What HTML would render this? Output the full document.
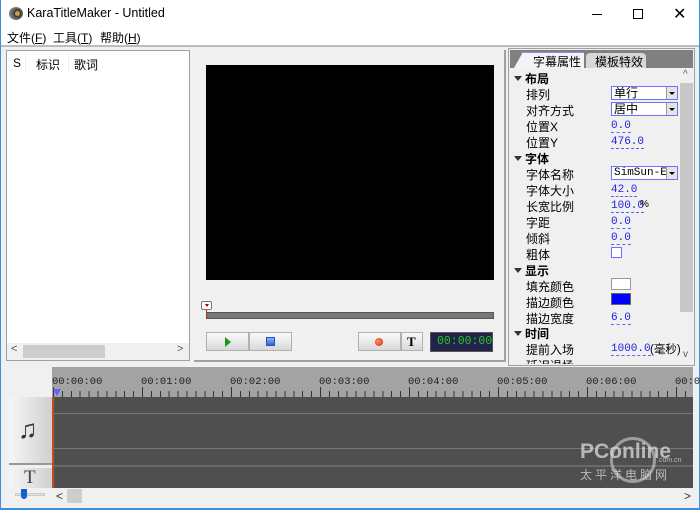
<!DOCTYPE html>
<html><head><meta charset="utf-8"><style>
*{margin:0;padding:0;box-sizing:border-box}
body{width:700px;height:510px;overflow:hidden;background:#f0f0f0;font-family:"Liberation Sans","Noto Sans CJK SC",sans-serif;font-size:12px;color:#000;position:relative}
.a{position:absolute}
.t{white-space:nowrap}
.lbl{position:absolute;left:526px;font-size:12px;white-space:nowrap}
.val{position:absolute;left:611px;font-family:"Liberation Mono","Noto Sans CJK SC",monospace;font-size:11px;color:#2020e0;border-bottom:1px dashed #6060ff;line-height:12px;white-space:nowrap}
.sec{position:absolute;left:514px;font-weight:bold;font-size:12px;white-space:nowrap}
.sec:before{content:"";display:inline-block;border-left:4px solid transparent;border-right:4px solid transparent;border-top:5px solid #333;margin-right:3px;vertical-align:2px}
.dd{position:absolute;left:611px;width:67px;height:14px;border:1px solid #7070ff;background:#fff;font-size:12px;line-height:12px;padding-left:2px;white-space:nowrap;overflow:hidden}
.dd b{position:absolute;right:0;top:0;width:11px;height:12px;background:#e4e4e4;border-left:1px solid #999}
.dd b:after{content:"";position:absolute;left:2px;top:5px;border-left:3px solid transparent;border-right:3px solid transparent;border-top:3px solid #000}
.btn{position:absolute;height:19px;background:linear-gradient(#fafafa,#d8d8d8);border:1px solid #b0b0b0}
.tick{position:absolute;font-family:"Liberation Mono",monospace;font-size:10.5px;color:#222}
</style></head><body>
<div class="a" style="left:0;top:0;width:1px;height:510px;background:#3c8fdc"></div>
<div class="a" style="left:699px;top:0;width:1px;height:510px;background:#3c8fdc"></div>
<div class="a" style="left:0;top:508px;width:700px;height:2px;background:#3c8fdc"></div>
<div class="a" style="left:1px;top:0;width:698px;height:28px;background:#fff"></div>
<div class="a" style="left:9px;top:7px;width:14px;height:13px;border-radius:50%;background:radial-gradient(circle at 60% 50%,#c8a040 0 2px,#333 3px,#777 6px)"></div>
<div class="a t" style="left:27px;top:6px;font-size:12.5px">KaraTitleMaker - Untitled</div>
<div class="a" style="left:592px;top:14px;width:10px;height:1px;background:#000"></div>
<div class="a" style="left:633px;top:9px;width:10px;height:10px;border:1px solid #000"></div>
<div class="a t" style="left:673px;top:4px;font-size:16px">✕</div>
<div class="a" style="left:1px;top:28px;width:698px;height:17px;background:#fff"></div>
<div class="a t" style="left:7px;top:29px">文件(<u>F</u>)</div>
<div class="a t" style="left:53px;top:29px">工具(<u>T</u>)</div>
<div class="a t" style="left:100px;top:29px">帮助(<u>H</u>)</div>
<div class="a" style="left:1px;top:45px;width:698px;height:2px;background:#bdbdbd"></div>
<div class="a" style="left:6px;top:50px;width:184px;height:311px;background:#fff;border:1px solid #a0a0a0"></div>
<div class="a t" style="left:13px;top:56px">S</div>
<div class="a" style="left:25px;top:53px;width:1px;height:20px;background:#eee"></div>
<div class="a t" style="left:36px;top:56px">标识</div>
<div class="a" style="left:68px;top:53px;width:1px;height:20px;background:#eee"></div>
<div class="a t" style="left:74px;top:56px">歌词</div>
<div class="a" style="left:7px;top:343px;width:182px;height:17px;background:#f0f0f0"></div>
<div class="a" style="left:23px;top:345px;width:82px;height:13px;background:#cdcdcd"></div>
<div class="a t" style="left:11px;top:343px;font-size:11px;color:#555">&lt;</div>
<div class="a t" style="left:177px;top:343px;font-size:11px;color:#555">&gt;</div>
<div class="a" style="left:194px;top:50px;width:312px;height:312px;border-right:2px solid #a0a0a0;border-bottom:2px solid #a0a0a0"></div>
<div class="a" style="left:206px;top:65px;width:288px;height:215px;background:#000"></div>
<div class="a" style="left:206px;top:312px;width:288px;height:7px;background:#777;border:1px solid #555"></div>
<div class="a" style="left:201px;top:301px;width:11px;height:9px;background:#fff;border:1px solid #777;border-radius:2px"></div>
<div class="a" style="left:205px;top:304px;border-left:2px solid transparent;border-right:2px solid transparent;border-top:3px solid #a00"></div>
<div class="a" style="left:206px;top:310px;width:1px;height:9px;background:#a33"></div>
<div class="btn" style="left:206px;top:332px;width:43px"></div>
<div class="btn" style="left:249px;top:332px;width:43px"></div>
<div class="a" style="left:225px;top:337px;border-top:5px solid transparent;border-bottom:5px solid transparent;border-left:6px solid #1a9a1a"></div>
<div class="a" style="left:266px;top:337px;width:9px;height:9px;background:linear-gradient(#8ab4ff,#2f66d8);border:1px solid #2950b0"></div>
<div class="btn" style="left:358px;top:332px;width:43px"></div>
<div class="btn" style="left:401px;top:332px;width:22px"></div>
<div class="a" style="left:375px;top:338px;width:8px;height:8px;border-radius:50%;background:radial-gradient(circle at 40% 40%,#ff9060,#d02000)"></div>
<div class="a t" style="left:407px;top:334px;font-family:'Liberation Serif',serif;font-weight:bold;font-size:13px">T</div>
<div class="a" style="left:430px;top:332px;width:63px;height:20px;background:#22224a;border:1px solid #555"></div>
<div class="a t" style="left:437px;top:335px;font-family:'Liberation Mono',monospace;font-size:11.5px;color:#20d020">00:00:00</div>
<div class="a" style="left:508px;top:48px;width:187px;height:318px;background:#f0f0f0;border:1px solid #a0a0a0"></div>
<div class="a" style="left:510px;top:50px;width:183px;height:18px;background:#808080"></div>
<div class="a" style="left:522px;top:52px;width:62px;height:16px;background:#f4f4f4;border-top:1px solid #88f"></div>
<div class="a" style="left:514px;top:52px;border-bottom:16px solid #f4f4f4;border-left:9px solid transparent"></div>
<div class="a t" style="left:533px;top:53px">字幕属性</div>
<div class="a" style="left:586px;top:53px;width:60px;height:15px;background:#d8d8d8;border-radius:4px 4px 0 0"></div>
<div class="a t" style="left:595px;top:53px">模板特效</div>
<div class="a" style="left:680px;top:68px;width:13px;height:296px;background:#f0f0f0"></div>
<div class="a" style="left:680px;top:83px;width:13px;height:229px;background:#c8c8c8"></div>
<div class="a t" style="left:683px;top:69px;font-size:10px;color:#555">^</div>
<div class="a t" style="left:683px;top:349px;font-size:10px;color:#555">v</div>

<div class="sec" style="top:70px">布局</div>
<div class="lbl" style="top:86px">排列</div><div class="dd" style="top:86px">单行<b></b></div>
<div class="lbl" style="top:102px">对齐方式</div><div class="dd" style="top:102px">居中<b></b></div>
<div class="lbl" style="top:118px">位置X</div><div class="val" style="top:120px">0.0</div>
<div class="lbl" style="top:134px">位置Y</div><div class="val" style="top:136px">476.0</div>
<div class="sec" style="top:150px">字体</div>
<div class="lbl" style="top:166px">字体名称</div><div class="dd" style="top:166px;font-family:'Liberation Mono',monospace;font-size:11px">SimSun-Ext<b></b></div>
<div class="lbl" style="top:182px">字体大小</div><div class="val" style="top:184px">42.0</div>
<div class="lbl" style="top:198px">长宽比例</div><div class="val" style="top:200px">100.0</div><div class="a t" style="left:640px;top:199px;font-size:10px">%</div>
<div class="lbl" style="top:214px">字距</div><div class="val" style="top:216px">0.0</div>
<div class="lbl" style="top:230px">倾斜</div><div class="val" style="top:232px">0.0</div>
<div class="lbl" style="top:246px">粗体</div><div class="a" style="left:611px;top:247px;width:11px;height:11px;border:1px solid #7070ff;background:#fff"></div>
<div class="sec" style="top:262px">显示</div>
<div class="lbl" style="top:278px">填充颜色</div><div class="a" style="left:611px;top:278px;width:20px;height:12px;background:#fff;border:1px solid #999"></div>
<div class="lbl" style="top:294px">描边颜色</div><div class="a" style="left:611px;top:293px;width:20px;height:12px;background:#0000ff;border:1px solid #666"></div>
<div class="lbl" style="top:310px">描边宽度</div><div class="val" style="top:312px">6.0</div>
<div class="sec" style="top:325px">时间</div>
<div class="lbl" style="top:341px">提前入场</div><div class="val" style="top:343px">1000.0</div><div class="a t" style="left:650px;top:341px;font-size:11.5px">(毫秒)</div>
<div class="a" style="left:510px;top:357px;width:170px;height:7px;overflow:hidden"><div class="lbl" style="left:16px;top:0">延迟退场</div></div>
<div class="a" style="left:52px;top:367px;width:641px;height:30px;background:#a3a3a3"></div>
<div class="tick" style="left:52px;top:376px">00:00:00</div>
<div class="tick" style="left:141px;top:376px">00:01:00</div>
<div class="tick" style="left:230px;top:376px">00:02:00</div>
<div class="tick" style="left:319px;top:376px">00:03:00</div>
<div class="tick" style="left:408px;top:376px">00:04:00</div>
<div class="tick" style="left:497px;top:376px">00:05:00</div>
<div class="tick" style="left:586px;top:376px">00:06:00</div>
<div class="tick" style="left:675px;top:376px">00:0</div>
<div class="a" style="left:53px;top:391px;width:640px;height:6px;background:repeating-linear-gradient(90deg,#333 0 1px,transparent 1px 8.9px)"></div>
<div class="a" style="left:53px;top:387px;width:640px;height:10px;background:repeating-linear-gradient(90deg,#333 0 1px,transparent 1px 89px)"></div>
<div class="a" style="left:53px;top:389px;border-left:4px solid transparent;border-right:4px solid transparent;border-top:7px solid #6060ff"></div>
<div class="a" style="left:52px;top:397px;width:641px;height:91px;background:#4f4f4f"></div>
<div class="a" style="left:52px;top:413px;width:641px;height:1px;background:#777"></div>
<div class="a" style="left:52px;top:448px;width:641px;height:1px;background:#777"></div>
<div class="a" style="left:52px;top:465px;width:641px;height:2px;background:#6a6a6a"></div>
<div class="a" style="left:52px;top:397px;width:2px;height:91px;background:#c05020"></div>
<div class="a" style="left:9px;top:397px;width:43px;height:68px;background:linear-gradient(90deg,#f6f6f6,#d0d0d0);border-bottom:2px solid #999"></div>
<div class="a t" style="left:18px;top:414px;font-size:26px;color:#333">♫</div>
<div class="a" style="left:9px;top:468px;width:43px;height:20px;background:linear-gradient(90deg,#f6f6f6,#d0d0d0)"></div>
<div class="a t" style="left:24px;top:467px;font-family:'Liberation Serif',serif;font-size:19px;color:#444">T</div>
<div class="a" style="left:15px;top:493px;width:30px;height:3px;background:#ddd;border:1px solid #ccc"></div>
<div class="a" style="left:21px;top:489px;width:6px;height:10px;background:#1060d0;border-radius:0 0 3px 3px"></div>
<div class="a t" style="left:56px;top:489px;font-size:12px;color:#333">&lt;</div>
<div class="a" style="left:67px;top:489px;width:15px;height:14px;background:#cdcdcd"></div>
<div class="a t" style="left:684px;top:489px;font-size:12px;color:#333">&gt;</div>
<div class="a" style="left:610px;top:437px;width:46px;height:46px;border-radius:50%;border:3px solid rgba(210,210,210,.6)"></div>
<div class="a t" style="left:580px;top:440px;font-size:21px;font-weight:bold;color:rgba(220,220,220,.75)">PConline</div>
<div class="a t" style="left:657px;top:457px;font-size:7px;color:rgba(220,220,220,.75)">.com.cn</div>
<div class="a t" style="left:580px;top:466px;font-size:12px;letter-spacing:3px;color:rgba(220,220,220,.75)">太平洋电脑网</div>
</body></html>
